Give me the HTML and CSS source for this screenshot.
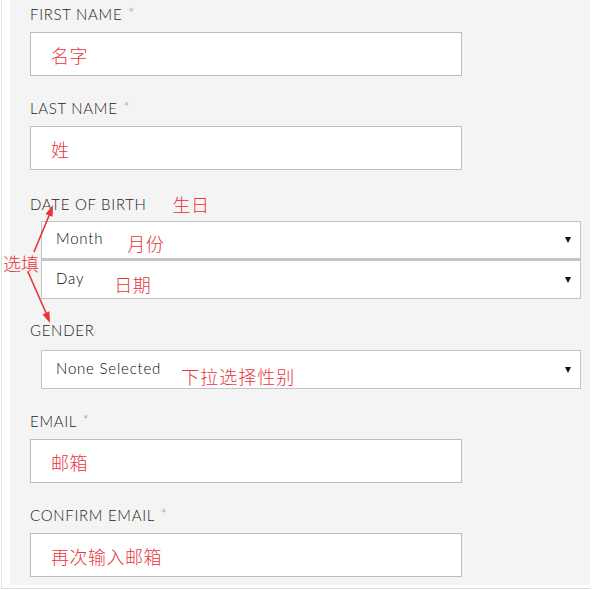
FILE: index.html
```html
<!DOCTYPE html>
<html>
<head>
<meta charset="utf-8">
<link rel="stylesheet" href="styles.css">
</head>
<body>
<div class="page">
  <form class="panel">
    <div class="field">
      <div class="label">FIRST NAME <span class="req">*</span></div>
      <div class="input"><span class="note">名字</span></div>
    </div>
    <div class="field">
      <div class="label">LAST NAME <span class="req">*</span></div>
      <div class="input"><span class="note">姓</span></div>
    </div>
    <div class="field dob">
      <div class="label">DATE OF BIRTH <span class="note note-dob">生日</span></div>
      <div class="selects">
        <div class="select"><span class="val">Month</span><span class="note note-month">月份</span><span class="caret"></span></div>
        <div class="select"><span class="val">Day</span><span class="note note-day">日期</span><span class="caret"></span></div>
      </div>
      <span class="side-note">选填</span>
      <svg class="arrows" width="60" height="135" viewBox="0 0 60 135">
        <g stroke="#e8333a" stroke-width="1.6" fill="none">
          <line x1="24" y1="60" x2="39.5" y2="22.5"/>
          <line x1="18" y1="80" x2="36.2" y2="121.3"/>
        </g>
        <g fill="#e8333a">
          <polygon points="43,13 42.6,24.8 35.6,22"/>
          <polygon points="40,131 39.4,119.2 32.6,122.4"/>
        </g>
      </svg>
    </div>
    <div class="field gender">
      <div class="label">GENDER</div>
      <div class="select single"><span class="val">None Selected</span><span class="note note-gender">下拉选择性别</span><span class="caret"></span></div>
    </div>
    <div class="field">
      <div class="label">EMAIL <span class="req">*</span></div>
      <div class="input"><span class="note">邮箱</span></div>
    </div>
    <div class="field last">
      <div class="label">CONFIRM EMAIL <span class="req">*</span></div>
      <div class="input"><span class="note">再次输入邮箱</span></div>
    </div>
  </form>
</div>
</body>
</html>
```
FILE: styles.css
```css
html, body {
  margin: 0;
  padding: 0;
  background: #ffffff;
}
body {
  font-family: Lato, "Open Sans", "Noto Sans CJK SC", sans-serif;
  color: #333333;
}
.page {
  width: 589px;
  height: 589px;
  margin-left: 1px;
  border-left: 1px solid #e4e4e4;
  padding-left: 8px;
  box-sizing: border-box;
  border-bottom: 1px solid #dcdcdc;
  padding-bottom: 2px;
}
.panel {
  width: 580px;
  height: 585px;
  background: #f4f4f4;
  padding: 4px 0 0 20px;
  box-sizing: border-box;
}
.field {
  margin-bottom: 22px;
  position: relative;
}
.label {
  font-size: 15px;
  font-weight: 300;
  line-height: 18px;
  height: 20px;
  letter-spacing: 0.7px;
  color: #1e1e1e;
  white-space: nowrap;
}
.req {
  color: #93a67f;
  font-size: 15px;
  margin-left: 1px;
  vertical-align: 1px;
}
.input {
  margin-top: 8px;
  width: 432px;
  height: 44px;
  box-sizing: border-box;
  background: #ffffff;
  border: 1px solid #bdbdbd;
  display: flex;
  align-items: center;
  padding-left: 20px;
}
.note {
  font-family: "Noto Sans CJK SC", sans-serif;
  color: #e8333a;
  font-size: 18px;
  line-height: 20px;
  font-weight: 300;
  letter-spacing: 0.5px;
}
.input .note {
  margin-top: 1px;
}
.note-dob {
  margin-left: 21px;
  position: relative;
  top: 2px;
}
.selects {
  margin-top: 9px;
  margin-left: 11px;
  width: 540px;
}
.select {
  height: 39px;
  box-sizing: border-box;
  background: #ffffff;
  border: 1px solid #c4c4c4;
  display: flex;
  align-items: center;
  padding: 0 9px 0 14px;
  font-size: 15px;
  font-weight: 300;
  color: #0a0a0a;
  letter-spacing: 0.8px;
}
.selects .select:first-child {
  border-bottom: 2px solid #c4c4c4;
}
.select.single {
  margin-top: 9px;
  margin-left: 11px;
  width: 540px;
}
.val {
  position: relative;
  top: -2px;
}
.note-month {
  margin-left: 24px;
  position: relative;
  top: 3px;
}
.note-day {
  margin-left: 30px;
  position: relative;
  top: 4px;
}
.note-gender {
  margin-left: 20px;
  position: relative;
  top: 6px;
  letter-spacing: 1px;
}
.caret {
  margin-left: auto;
  width: 0;
  height: 0;
  border-left: 3px solid transparent;
  border-right: 3px solid transparent;
  border-top: 6px solid #111111;
}
.dob {
  margin-bottom: 22px;
}
.side-note {
  position: absolute;
  left: -27px;
  top: 61px;
  white-space: nowrap;
  font-family: "Noto Sans CJK SC", sans-serif;
  color: #e8333a;
  font-size: 18px;
  line-height: 20px;
  font-weight: 300;
}
.arrows {
  position: absolute;
  left: -20px;
  top: 0;
  overflow: visible;
}
.last {
  margin-bottom: 0;
}
```
